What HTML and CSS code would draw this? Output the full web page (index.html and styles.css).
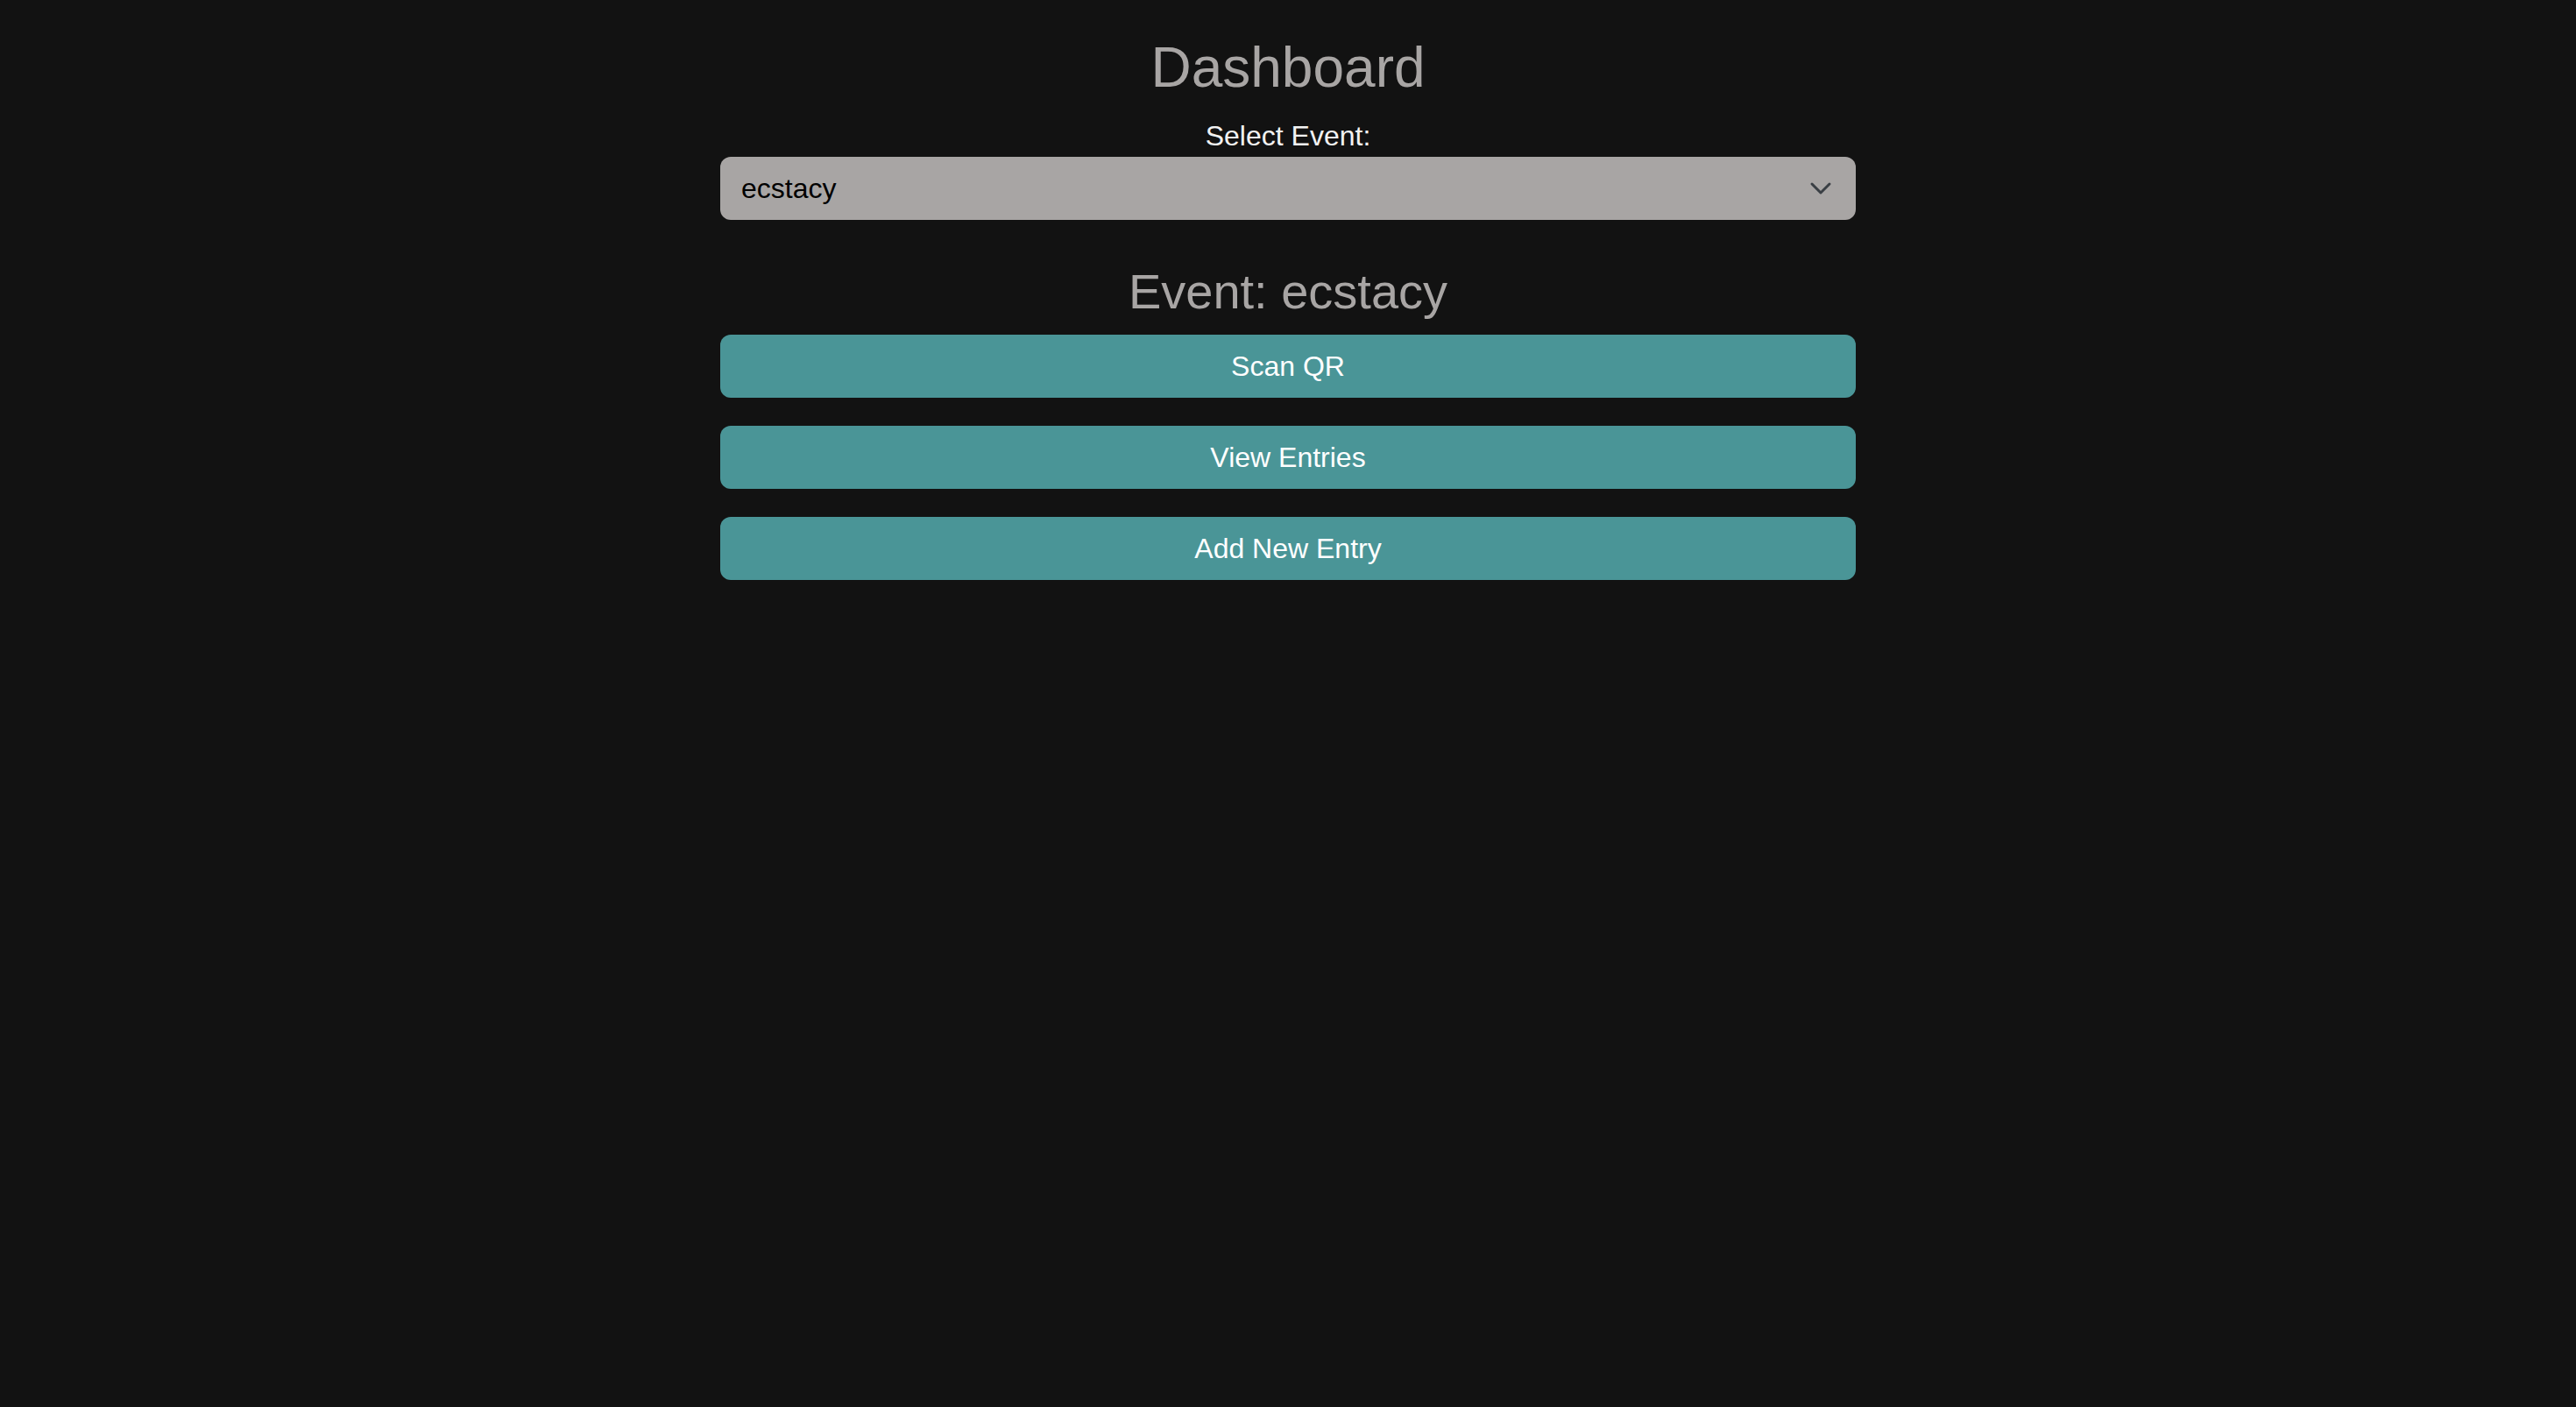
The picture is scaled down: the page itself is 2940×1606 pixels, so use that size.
FILE: index.html
```html
<!DOCTYPE html>
<html lang="en">
<head>
<meta charset="utf-8">
<title>Dashboard</title>
<link rel="stylesheet" href="styles.css">
</head>
<body>
<main class="dashboard">
  <h1 class="title">Dashboard</h1>
  <label class="select-label" for="event">Select Event:</label>
  <div class="select-wrap">
    <select id="event" class="event-select">
      <option>ecstacy</option>
    </select>
    <svg class="chevron" width="40" height="40" viewBox="0 0 24 24" aria-hidden="true">
      <path d="M6 9l6 6 6-6" fill="none" stroke="#3a3f44" stroke-width="1.8" stroke-linecap="round" stroke-linejoin="round"/>
    </svg>
  </div>
  <h2 class="event-title">Event: ecstacy</h2>
  <div class="actions">
    <button class="action-btn">Scan QR</button>
    <button class="action-btn">View Entries</button>
    <button class="action-btn">Add New Entry</button>
  </div>
</main>
</body>
</html>
```
FILE: styles.css
```css
html, body {
  margin: 0;
  padding: 0;
  background: #121212;
  min-height: 100%;
}

body {
  font-family: "Liberation Sans", Arial, Helvetica, sans-serif;
  min-height: 1606px;
}

.dashboard {
  width: 1296px;
  margin: 0 auto;
  padding-top: 40px;
  display: flex;
  flex-direction: column;
  align-items: stretch;
}

.title {
  margin: 0;
  font-size: 64px;
  font-weight: 400;
  line-height: 74px;
  color: #a8a5a4;
  text-align: center;
}

.select-label {
  margin-top: 23px;
  font-size: 32px;
  line-height: 37px;
  color: #f2f2f2;
  text-align: center;
}

.select-wrap {
  position: relative;
  margin-top: 5px;
}

.event-select {
  display: block;
  width: 100%;
  height: 72px;
  margin: 0;
  padding: 0 80px 0 24px;
  border: none;
  border-radius: 12px;
  background: #a8a5a4;
  color: #000;
  font-family: "Liberation Sans", Arial, Helvetica, sans-serif;
  font-size: 32px;
  -webkit-appearance: none;
  appearance: none;
  outline: none;
}

.chevron {
  position: absolute;
  right: 20px;
  top: 16px;
  pointer-events: none;
}

.event-title {
  margin: 49px 0 0;
  font-size: 56px;
  font-weight: 400;
  line-height: 65px;
  color: #a8a5a4;
  text-align: center;
}

.actions {
  margin-top: 17px;
  display: flex;
  flex-direction: column;
  gap: 32px;
}

.action-btn {
  display: block;
  width: 100%;
  height: 72px;
  margin: 0;
  padding: 0;
  border: none;
  border-radius: 12px;
  background: #4a9597;
  color: #fff;
  font-family: "Liberation Sans", Arial, Helvetica, sans-serif;
  font-size: 32px;
  line-height: 37px;
  cursor: pointer;
}
```
